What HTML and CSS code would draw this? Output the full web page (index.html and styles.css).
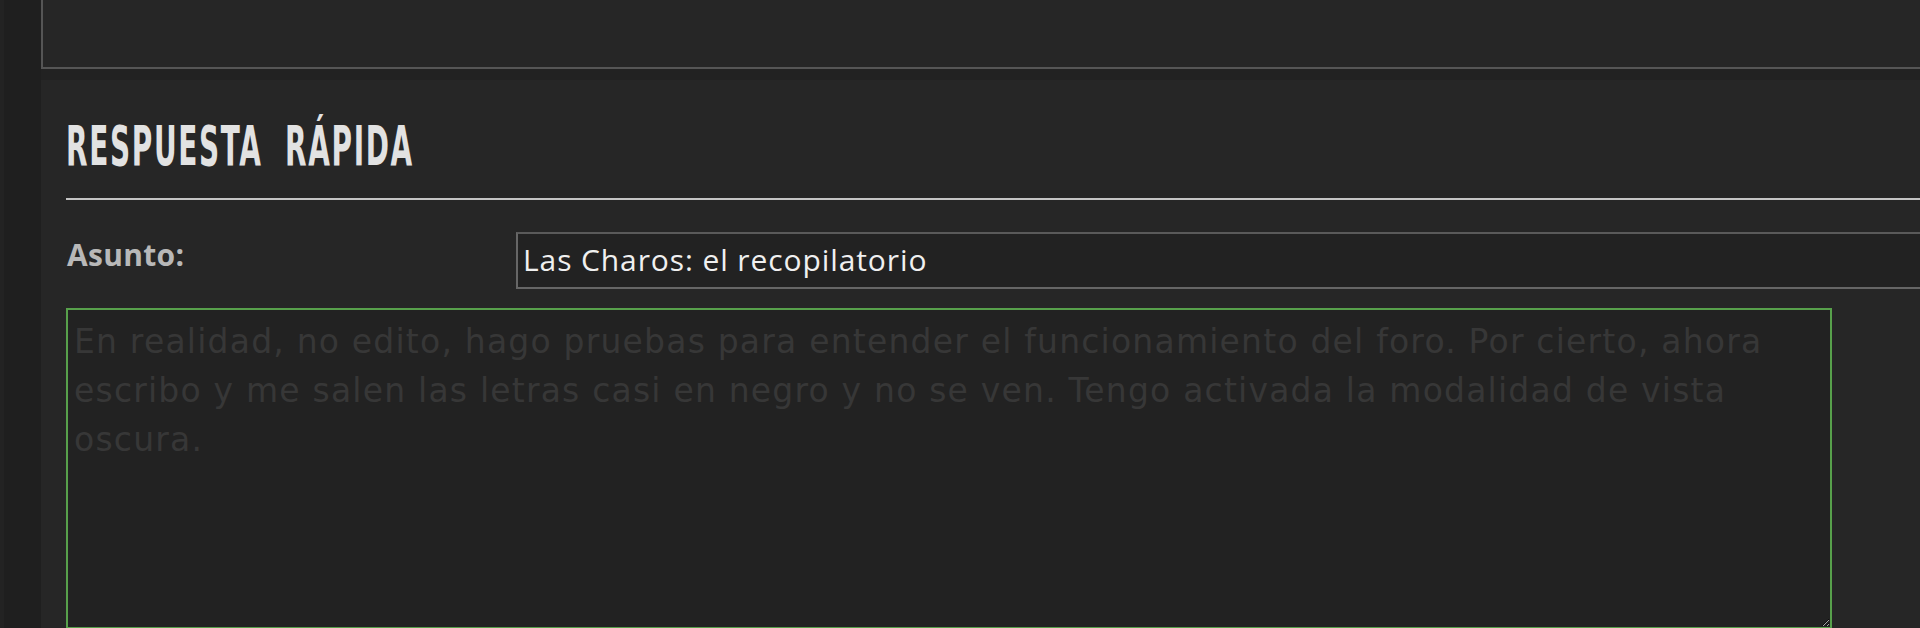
FILE: index.html
```html
<!DOCTYPE html>
<html lang="es">
<head>
<meta charset="utf-8">
<title>Respuesta rápida</title>
<link rel="stylesheet" href="styles.css">
</head>
<body>
<div class="page">
  <div class="gutter"><div class="gutter-edge"></div></div>
  <main class="main">
    <div class="topbox"></div>
    <section class="panel">
      <h2 class="panel-title"><span class="title-text">RESPUESTA RÁPIDA</span></h2>
      <form class="reply-form">
        <div class="field-row">
          <label class="field-label" for="subject">Asunto:</label>
          <input class="subject-input" id="subject" type="text" value="Las Charos: el recopilatorio">
        </div>
        <textarea class="message" id="message" spellcheck="false">En realidad, no edito, hago pruebas para entender el funcionamiento del foro. Por cierto, ahora escribo y me salen las letras casi en negro y no se ven. Tengo activada la modalidad de vista oscura.</textarea>
      </form>
    </section>
  </main>
</div>
<script src="script.js"></script>
</body>
</html>
```

FILE: styles.css
```css
html, body {
  margin: 0;
  padding: 0;
}
body {
  background: #222222;
  width: 1920px;
  height: 628px;
  overflow: hidden;
  font-family: "Open Sans", "Noto Sans", sans-serif;
}
.page {
  display: flex;
  height: 628px;
}
.gutter {
  width: 41px;
  flex: none;
  display: flex;
  background: #1f1f1f;
}
.gutter-edge {
  width: 4px;
  background: #232323;
}
.main {
  flex: 1;
  margin-right: -60px;
  display: flex;
  flex-direction: column;
}
.topbox {
  height: 67px;
  background: #262626;
  border-left: 2px solid #555555;
  border-bottom: 2px solid #555555;
  margin-bottom: 11px;
  flex: none;
}
.panel {
  flex: 1;
  background: #262626;
  padding: 38px 0 0 25px;
}
.panel-title {
  margin: 0;
  height: 56px;
  padding-bottom: 24px;
  border-bottom: 2px solid #c4c4c4;
  font-family: "DejaVu Sans Condensed", "DejaVu Sans", sans-serif;
  font-weight: 700;
  font-size: 56px;
  line-height: 56px;
  color: #e2e2e2;
  white-space: nowrap;
}
.title-text {
  display: inline-block;
  transform: scaleX(0.555);
  transform-origin: left center;
  letter-spacing: 3px;
  word-spacing: 20px;
}
.reply-form {
  display: flex;
  flex-direction: column;
  gap: 19px;
  padding-top: 32px;
}
.field-row {
  display: grid;
  grid-template-columns: 450px 1fr;
}
.field-label {
  font-weight: 700;
  font-size: 30px;
  line-height: 45px;
  color: #b8b8b8;
  padding-left: 1px;
  letter-spacing: 0.3px;
}
.subject-input {
  box-sizing: border-box;
  height: 57px;
  margin: 0;
  border: 2px solid #666666;
  border-top-color: #5a5a5a;
  background: #222222;
  color: #f0f0f0;
  font-family: "Open Sans", "Noto Sans", sans-serif;
  font-size: 30px;
  letter-spacing: 0.9px;
  padding: 0 0 2px 5px;
  outline: none;
}
.message {
  box-sizing: border-box;
  width: 1766px;
  height: 321px;
  margin: 0;
  border: 2px solid #57a04b;
  background: #222222;
  color: #373737;
  caret-color: #5a5a5a;
  font-family: "DejaVu Sans", "Open Sans", sans-serif;
  font-size: 33px;
  line-height: 49px;
  letter-spacing: 1.2px;
  padding: 7px 6px 0 6px;
  outline: none;
  resize: vertical;
  color-scheme: dark;
  overflow: hidden;
}
```

FILE: script.js
```js
(function () {
  var ta = document.getElementById('message');
  if (!ta) return;
  ta.focus();
  var end = ta.value.length;
  ta.setSelectionRange(end, end);
})();
```
